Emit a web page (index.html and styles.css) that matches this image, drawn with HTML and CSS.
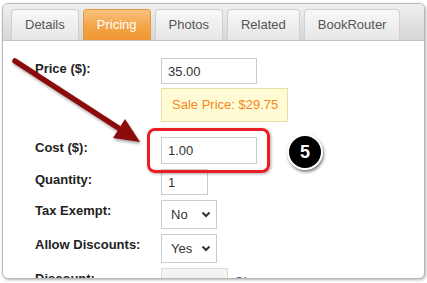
FILE: index.html
```html
<!DOCTYPE html>
<html lang="en">
<head>
<meta charset="UTF-8">
<meta name="viewport" content="width=device-width, initial-scale=1.0">
<title>Pricing</title>
<link rel="stylesheet" href="styles.css">
</head>
<body>

<div class="frame">
    <!-- Tabs -->
    <ul class="tabs">
        <li class="tab">Details</li>
        <li class="tab active">Pricing</li>
        <li class="tab">Photos</li>
        <li class="tab">Related</li>
        <li class="tab">BookRouter</li>
    </ul>

    <!-- Pricing form -->
    <div class="panel">
        <div class="form">
            <label class="lbl">Price ($):</label>
            <div class="ctl">
                <input class="txt w-price" type="text" value="35.00">
                <div class="sale">Sale Price: $29.75</div>
            </div>

            <label class="lbl">Cost ($):</label>
            <div class="ctl">
                <input class="txt w-price cost" type="text" value="1.00">
            </div>

            <label class="lbl">Quantity:</label>
            <div class="ctl">
                <input class="txt w-qty" type="text" value="1">
            </div>

            <label class="lbl">Tax Exempt:</label>
            <div class="ctl">
                <span class="sel">
                    <select><option>No</option></select>
                    <svg class="chev" width="10" height="7" viewBox="0 0 10 7"><path d="M1.5 1.5 L5 5 L8.5 1.5" fill="none" stroke="#333" stroke-width="2"/></svg>
                </span>
            </div>

            <label class="lbl">Allow Discounts:</label>
            <div class="ctl">
                <span class="sel">
                    <select><option>Yes</option></select>
                    <svg class="chev" width="10" height="7" viewBox="0 0 10 7"><path d="M1.5 1.5 L5 5 L8.5 1.5" fill="none" stroke="#333" stroke-width="2"/></svg>
                </span>
            </div>

            <label class="lbl">Discount:</label>
            <div class="ctl row">
                <span class="sel">
                    <select class="w-disc" disabled><option>15%</option></select>
                    <svg class="chev" width="10" height="7" viewBox="0 0 10 7"><path d="M1.5 1.5 L5 5 L8.5 1.5" fill="none" stroke="#bbb" stroke-width="2"/></svg>
                </span>
                <a class="link" href="#">Change</a>
            </div>
        </div>
    </div>
</div>

<!-- Annotations -->
<div class="highlight"></div>
<svg class="arrow" width="427" height="283" viewBox="0 0 427 283">
    <line x1="15" y1="61" x2="120" y2="129" stroke="#8c0a0a" stroke-width="5.5" stroke-linecap="round"/>
    <polygon points="140,142 113,138 125,119" fill="#8c0a0a"/>
</svg>
<div class="callout">5</div>

</body>
</html>
```

FILE: styles.css
```css
/* Reset */
* {
    box-sizing: border-box;
    margin: 0;
    padding: 0;
    font-family: 'Liberation Sans', Arial, sans-serif;
}

body {
    background: #fff;
    width: 427px;
    height: 283px;
    overflow: hidden;
    position: relative;
}

.frame {
    width: 423px;
    height: 276px;
    margin: 3px 0 0 2px;
    border: 1px solid #b8b8b8;
    border-radius: 6px;
    box-shadow: 1px 1px 3px rgba(0, 0, 0, 0.3);
    overflow: hidden;
    background: #fff;
}

/* Tabs */
.tabs {
    display: flex;
    list-style: none;
    height: 37px;
    padding: 5px 0 0 8px;
    background: linear-gradient(#efefef, #d6d6d6);
    border-bottom: 1px solid #c4c4c4;
}

.tab {
    height: 31px;
    line-height: 30px;
    padding: 0 13px;
    margin-right: 4px;
    font-size: 13px;
    color: #555;
    background: linear-gradient(#f8f8f8, #e6e6e6);
    border: 1px solid #d0d0d0;
    border-bottom: none;
    border-radius: 4px 4px 0 0;
}

.tab.active {
    color: #fff;
    background: linear-gradient(#f8c27e, #f3a547 55%, #f09632);
    border-color: #e09a45;
}

/* Form */
.panel {
    padding: 17px 0 0 32px;
}

.form {
    display: grid;
    grid-template-columns: 126px 1fr;
    row-gap: 5px;
}

.lbl {
    font-size: 13px;
    font-weight: bold;
    line-height: 16px;
    padding-top: 3px;
    color: #222;
}

.ctl.row {
    display: flex;
    align-items: flex-start;
    gap: 6px;
}

.txt {
    height: 26px;
    padding: 0 6px;
    font-size: 13px;
    color: #333;
    border: 1px solid #ccc;
    outline: none;
}

.txt.cost {
    height: 27px;
}

.w-price { width: 96px; }
.w-qty { width: 47px; }

.sale {
    width: 127px;
    height: 34px;
    margin: 4px 0 10px;
    padding-left: 10px;
    line-height: 32px;
    font-size: 13px;
    color: #f6861f;
    background: #fffbd5;
    border: 1px solid #e6dfa8;
}

.sel {
    position: relative;
    display: inline-block;
}

.sel select {
    appearance: none;
    -webkit-appearance: none;
    display: block;
    width: 56px;
    height: 29px;
    padding-left: 9px;
    font-size: 13px;
    color: #333;
    background: #fff;
    border: 1px solid #ccc;
    border-radius: 0;
    outline: none;
}

.sel select.w-disc {
    width: 67px;
    height: 18px;
    padding-top: 6px;
    color: #aaa;
    background: #eee;
    border-bottom: none;
}

.chev {
    position: absolute;
    right: 6px;
    top: 11px;
}

.link {
    padding-top: 6px;
    font-size: 13px;
    line-height: 16px;
    color: #1d5fa8;
    text-decoration: none;
}

/* Annotations */
.highlight {
    position: absolute;
    left: 147px;
    top: 128px;
    width: 123px;
    height: 45px;
    border: 3px solid #ec1c24;
    border-radius: 8px;
    box-shadow: 1px 1px 3px rgba(0, 0, 0, 0.35);
}

.arrow {
    position: absolute;
    left: 0;
    top: 0;
    pointer-events: none;
    filter: drop-shadow(1px 2px 1.5px rgba(0, 0, 0, 0.35));
}

.callout {
    position: absolute;
    left: 287px;
    top: 134px;
    width: 36px;
    height: 36px;
    border: 2px solid #fff;
    border-radius: 50%;
    background: #000;
    color: #fff;
    font-size: 18px;
    font-weight: bold;
    line-height: 32px;
    text-align: center;
    box-shadow: 1px 2px 3px rgba(0, 0, 0, 0.5);
}
```
